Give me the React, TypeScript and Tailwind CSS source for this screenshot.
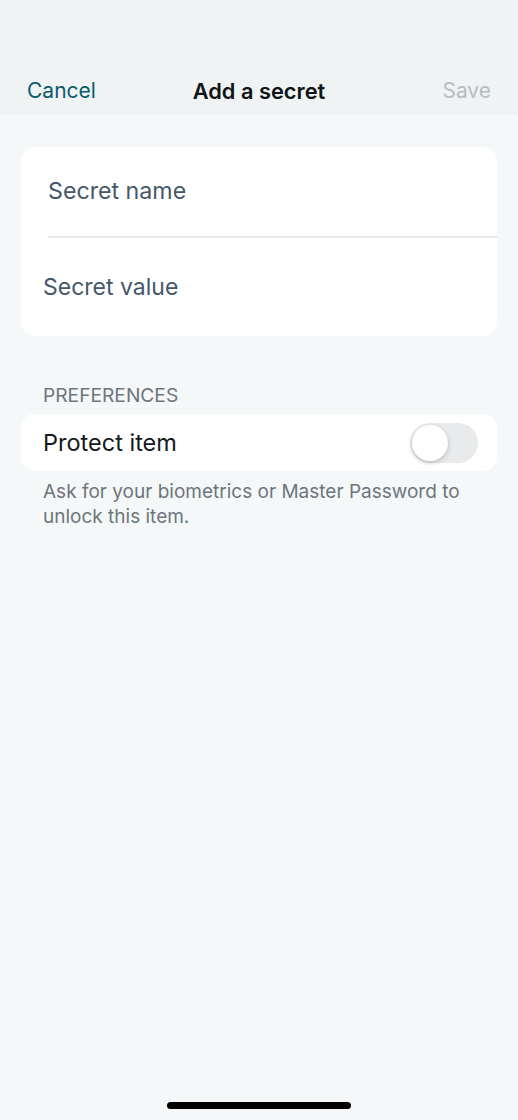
export default function App() {
  return (
    <div className="relative flex h-[1120px] w-[518px] flex-col bg-[#f4f8f9] font-['Inter',sans-serif] antialiased">
      <div className="flex h-[115px] shrink-0 items-end bg-[#eff3f4] px-[27px] pb-[9px]">
        <div className="grid w-full grid-cols-[1fr_auto_1fr] items-center leading-[30px]">
          <span className="justify-self-start text-[21px] text-[#0b5a6a]">Cancel</span>
          <span className="text-[21.8px] font-semibold text-[#101416]">Add a secret</span>
          <span className="justify-self-end text-[21px] text-[#b7bdc0]">Save</span>
        </div>
      </div>
      <div className="flex flex-col px-[21px] pt-[32px]">
        <div className="flex flex-col rounded-[14px] bg-white">
          <div className="flex h-[89px] items-center pl-[27px] text-[23.2px] text-[#46576a]">Secret name</div>
          <div className="ml-[27px] h-[2px] bg-[#e6e9eb]" />
          <div className="flex h-[98px] items-center pl-[22px] text-[23px] text-[#46576a]">Secret value</div>
        </div>
        <div className="mt-[47px] pl-[22px] text-[19.2px] leading-[24px] text-[#6e757b]">PREFERENCES</div>
        <div className="mt-[7px] flex h-[57px] items-center justify-between rounded-[14px] bg-white pl-[22px] pr-[19px]">
          <span className="text-[23.5px] text-[#15191c]">Protect item</span>
          <div className="flex h-[40px] w-[68px] items-center rounded-full bg-[#e9eaeb] p-[2px]">
            <div className="h-[36px] w-[36px] rounded-full bg-white shadow-[0_2px_5px_rgba(0,0,0,0.2)]" />
          </div>
        </div>
        <div className="mt-[8px] pl-[22px] pr-[20px] text-[19px] leading-[25px] text-[#6e757b]">
          Ask for your biometrics or Master Password to unlock this item.
        </div>
      </div>
      <div className="absolute bottom-[11px] left-[167px] h-[7px] w-[184px] rounded-full bg-black" />
    </div>
  );
}
